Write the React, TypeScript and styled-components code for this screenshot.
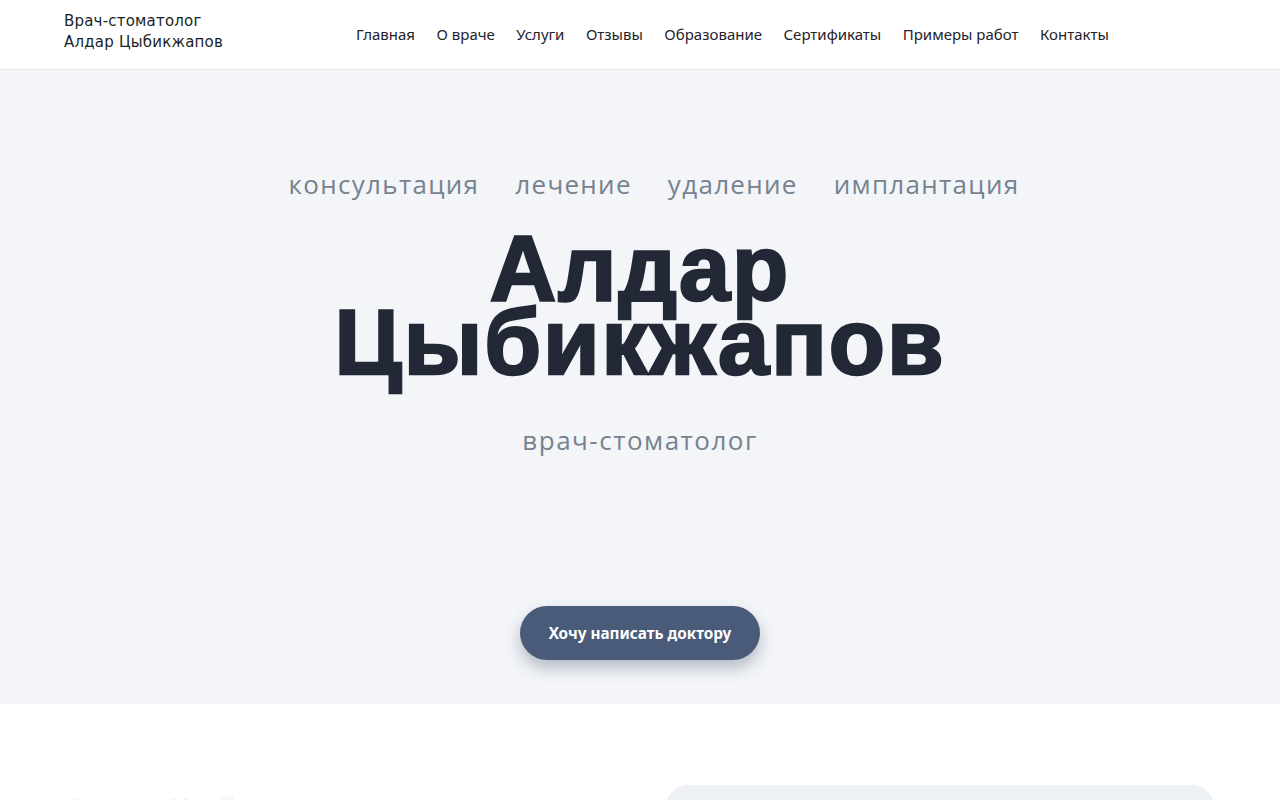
import React from 'react';
import styled, { createGlobalStyle } from 'styled-components';

const GlobalStyle = createGlobalStyle`
  * { box-sizing: border-box; }
  body {
    margin: 0;
    background: #ffffff;
    font-family: 'Noto Sans', sans-serif;
    color: #1f2430;
  }
`;

const navItems = [
  'Главная',
  'О враче',
  'Услуги',
  'Отзывы',
  'Образование',
  'Сертификаты',
  'Примеры работ',
  'Контакты',
];

const services = ['консультация', 'лечение', 'удаление', 'имплантация'];

export default function App() {
  return (
    <>
      <GlobalStyle />
      <Header>
        <Logo>
          Врач-стоматолог
          <br />
          Алдар Цыбикжапов
        </Logo>
        <Nav>
          {navItems.map((item) => (
            <NavLink key={item} href="#">
              {item}
            </NavLink>
          ))}
        </Nav>
      </Header>
      <Hero>
        <Tags>
          {services.map((s) => (
            <Tag key={s}>{s}</Tag>
          ))}
        </Tags>
        <Name>
          <NameLine>Алдар</NameLine>
          <NameLine>Цыбикжапов</NameLine>
        </Name>
        <Subtitle>врач-стоматолог</Subtitle>
        <CtaButton>Хочу написать доктору</CtaButton>
      </Hero>
      <About>
        <AboutText>Алдар Цыбикжапов — врач-стоматолог</AboutText>
        <AboutCard />
      </About>
    </>
  );
}

const Header = styled.header`
  height: 70px;
  display: flex;
  align-items: center;
  padding: 0 64px;
  border-bottom: 1px solid #e3e6ea;
  background: #fff;
`;

const Logo = styled.div`
  width: 292px;
  font-family: 'DejaVu Sans', sans-serif;
  font-size: 15px;
  line-height: 21px;
  letter-spacing: 0.2px;
  color: #1b1f27;
  margin-top: -5px;
`;

const Nav = styled.nav`
  display: flex;
  gap: 21.5px;
  margin-top: -2px;
`;

const NavLink = styled.a`
  font-family: 'Noto Sans', sans-serif;
  font-size: 15px;
  color: #1f232b;
  text-decoration: none;
`;

const Hero = styled.section`
  height: 634px;
  background: #f3f5f9;
  display: flex;
  flex-direction: column;
  align-items: center;
  padding-top: 94px;
`;

const Tags = styled.div`
  display: flex;
  gap: 36px;
  margin-left: 28px;
`;

const Tag = styled.span`
  font-family: 'Open Sans', sans-serif;
  font-size: 26px;
  letter-spacing: 1.3px;
  color: #76838f;
  line-height: 40px;
`;

const Name = styled.h1`
  margin: 27px 0 0;
  display: flex;
  flex-direction: column;
  align-items: center;
  font-family: 'Liberation Sans', Arial, sans-serif;
  font-weight: 900;
  font-size: 92px;
  letter-spacing: 2px;
  color: #222835;
  -webkit-text-stroke: 2.5px #222835;
`;

const NameLine = styled.span`
  display: block;
  height: 74px;
  line-height: 74px;
`;

const Subtitle = styled.div`
  margin-top: 43px;
  font-family: 'Open Sans', sans-serif;
  font-size: 26px;
  letter-spacing: 1.5px;
  color: #76838f;
`;

const CtaButton = styled.button`
  margin-top: 148px;
  height: 54px;
  padding: 0 29px;
  border: none;
  border-radius: 27px;
  background: #4a5b7a;
  color: #fff;
  font-family: 'Noto Sans', sans-serif;
  font-weight: 700;
  font-size: 15.3px;
  box-shadow: 0 8px 16px rgba(40, 50, 70, 0.3);
  cursor: pointer;
`;

const About = styled.section`
  display: flex;
  justify-content: space-between;
  padding: 81px 66px 0;
`;

const AboutText = styled.h2`
  margin: 6px 0 0;
  font-family: 'Liberation Sans', sans-serif;
  font-size: 30px;
  font-weight: 700;
  color: #f6f6f7;
`;

const AboutCard = styled.div`
  width: 548px;
  height: 300px;
  border-radius: 22px;
  background: #edf0f4;
`;
